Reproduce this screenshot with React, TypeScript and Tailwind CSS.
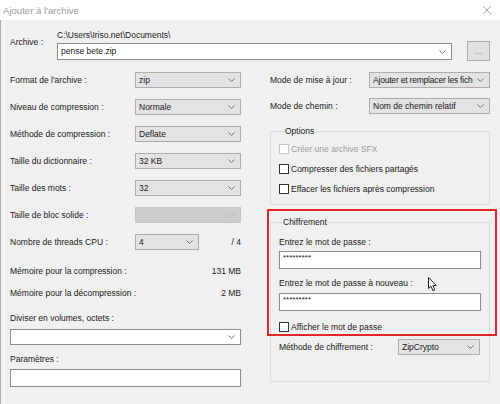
import React from "react";

const font = "font-['Liberation_Sans',Arial,sans-serif]";

function Chevron({ light }: { light?: boolean }) {
  return (
    <svg width="7" height="4" viewBox="0 0 7 4" className="shrink-0">
      <path
        d="M0.5 0.5 L3.5 3.5 L6.5 0.5"
        fill="none"
        stroke={light ? "#b8b8b8" : "#707070"}
        strokeWidth="1"
      />
    </svg>
  );
}

function Combo({
  value,
  className,
  disabled,
  editable,
}: {
  value?: string;
  className: string;
  disabled?: boolean;
  editable?: boolean;
}) {
  const skin = disabled
    ? "border-[#c4c4c4] bg-[#cccccc]"
    : editable
      ? "border-[#8c8c8c] bg-white"
      : "border-[#adadad] bg-[#e3e3e3]";
  return (
    <div
      className={`flex shrink-0 items-center justify-between gap-[2px] border pl-[3px] pr-[5px] ${skin} ${className}`}
    >
      <span className="whitespace-nowrap">{value}</span>
      <Chevron light={disabled} />
    </div>
  );
}

function Check({ label, disabled }: { label: string; disabled?: boolean }) {
  return (
    <div className="flex h-[10px] items-center gap-[2px]">
      <div
        className={`h-[10px] w-[10px] shrink-0 border bg-white ${
          disabled ? "border-[#c6c6c6]" : "border-[#333333]"
        }`}
      />
      <span className={disabled ? "text-[#9d9d9d]" : ""}>{label}</span>
    </div>
  );
}

function Row({
  label,
  children,
  labelW,
}: {
  label: string;
  children: React.ReactNode;
  labelW: string;
}) {
  return (
    <div className="flex h-[16px] items-center">
      <span className={`shrink-0 ${labelW}`}>{label}</span>
      {children}
    </div>
  );
}

export default function App() {
  return (
    <div
      className={`relative h-[404px] w-[500px] overflow-hidden bg-[#f0f0f0] text-[8.5px] leading-[11px] text-[#1a1a1a] ${font}`}
    >
      {/* Title bar */}
      <div className="flex h-[20px] items-center justify-between bg-white pl-[3px] pr-[8px]">
        <span className="text-[9.6px] text-[#9b9b9b]">Ajouter à l'archive</span>
        <svg width="10" height="10" viewBox="0 0 10 10">
          <path d="M1 1 L9 9 M9 1 L1 9" stroke="#a6a6a6" strokeWidth="1" />
        </svg>
      </div>

      <div className="h-[384px] border-l border-[#ababab] pl-[9px]">
        {/* Archive */}
        <div className="flex pt-[10px]">
          <span className="mt-[7px] w-[47px] shrink-0">Archive :</span>
          <div className="flex w-[395px] flex-col">
            <span className="h-[11px]">C:\Users\Iriso.net\Documents\</span>
            <Combo value="pense bete.zip" editable className="mt-[2px] h-[17px] w-[395px]" />
          </div>
          <div className="ml-[15px] mt-[11px] flex h-[20px] w-[23px] items-center justify-center border border-[#adadad] bg-[#e1e1e1] text-[#888]">
            ...
          </div>
        </div>

        <div className="mt-[11px] flex">
          {/* Left column */}
          <div className="flex w-[231px] flex-col">
            <div className="flex flex-col gap-[11px]">
              <Row label="Format de l'archive :" labelW="w-[125px]">
                <Combo value="zip" className="h-[16px] w-[106px]" />
              </Row>
              <Row label="Niveau de compression :" labelW="w-[125px]">
                <Combo value="Normale" className="h-[16px] w-[106px]" />
              </Row>
              <Row label="Méthode de compression :" labelW="w-[125px]">
                <Combo value="Deflate" className="h-[16px] w-[106px]" />
              </Row>
              <Row label="Taille du dictionnaire :" labelW="w-[125px]">
                <Combo value="32 KB" className="h-[16px] w-[106px]" />
              </Row>
              <Row label="Taille des mots :" labelW="w-[125px]">
                <Combo value="32" className="h-[16px] w-[106px]" />
              </Row>
              <Row label="Taille de bloc solide :" labelW="w-[125px]">
                <Combo disabled className="h-[16px] w-[106px]" />
              </Row>
              <Row label="Nombre de threads CPU :" labelW="w-[125px]">
                <Combo value="4" className="h-[16px] w-[64px]" />
                <span className="ml-auto">/ 4</span>
              </Row>
            </div>

            <div className="mt-[16px] flex justify-between">
              <span>Mémoire pour la compression :</span>
              <span>131 MB</span>
            </div>
            <div className="mt-[11px] flex justify-between">
              <span>Mémoire pour la décompression :</span>
              <span>2 MB</span>
            </div>

            <span className="mt-[14px]">Diviser en volumes, octets :</span>
            <Combo editable className="mt-[5px] h-[16px] w-[231px]" />
            <span className="mt-[9px]">Paramètres :</span>
            <div className="mt-[4px] h-[18px] w-[231px] border border-[#8c8c8c] bg-white" />
          </div>

          {/* Right column */}
          <div className="ml-[29px] flex w-[220px] flex-col">
            <div className="flex flex-col gap-[10px]">
              <Row label="Mode de mise à jour :" labelW="w-[99px]">
                <Combo value="Ajouter et remplacer les fich" className="h-[16px] w-[121px] tracking-[-0.2px]" />
              </Row>
              <Row label="Mode de chemin :" labelW="w-[99px]">
                <Combo value="Nom de chemin relatif" className="h-[16px] w-[121px]" />
              </Row>
            </div>

            <fieldset className="mt-[12px] h-[79px] border border-[#dcdcdc] pl-[8px]">
              <legend className="ml-[5px] px-[1px]">Options</legend>
              <div className="mt-[7px] flex flex-col gap-[10px]">
                <Check label="Créer une archive SFX" disabled />
                <Check label="Compresser des fichiers partagés" />
                <Check label="Effacer les fichiers après compression" />
              </div>
            </fieldset>

            <fieldset className="mt-[12px] h-[165px] border border-[#dcdcdc] pl-[8px]">
              <legend className="ml-[3px] px-[1px]">Chiffrement</legend>
              <div className="mt-[9px]">Entrez le mot de passe :</div>
              <div className="mt-[3px] flex h-[18px] w-[202px] items-start border border-[#8c8c8c] bg-white pl-[3px] pt-[2px] text-[8px] leading-[8px]">
                *********
              </div>
              <div className="mt-[9px]">Entrez le mot de passe à nouveau :</div>
              <div className="mt-[4px] flex h-[18px] w-[202px] items-start border border-[#8c8c8c] bg-white pl-[3px] pt-[2px] text-[8px] leading-[8px]">
                *********
              </div>
              <div className="mt-[11px]">
                <Check label="Afficher le mot de passe" />
              </div>
              <div className="mt-[7px] flex h-[16px] items-center">
                <span className="w-[119px] shrink-0">Méthode de chiffrement :</span>
                <Combo value="ZipCrypto" className="h-[16px] w-[82px]" />
              </div>
            </fieldset>
          </div>
        </div>
      </div>

      {/* Highlight */}
      <div className="pointer-events-none absolute left-[267px] top-[209px] h-[127px] w-[230px] border-2 border-[#e3262b]" />

      {/* Mouse pointer */}
      <svg
        className="absolute left-[428px] top-[277px]"
        width="10"
        height="15"
        viewBox="0 0 10 15"
      >
        <path
          d="M0.5 0.5 L0.5 11.5 L3 9.2 L5 13.8 L6.8 13 L4.9 8.6 L8.3 8.6 Z"
          fill="white"
          stroke="#222"
          strokeWidth="1"
          strokeLinejoin="round"
        />
      </svg>
    </div>
  );
}
